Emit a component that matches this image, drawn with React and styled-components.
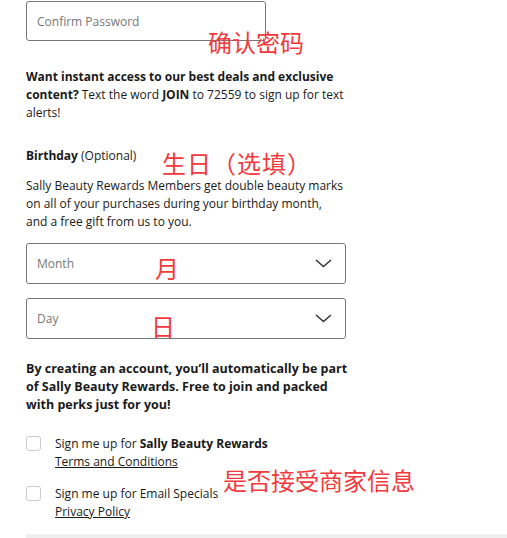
import styled, { createGlobalStyle } from "styled-components";

const GlobalStyle = createGlobalStyle`
  body {
    margin: 0;
    background: #fff;
    font-family: "Open Sans", "Liberation Sans", sans-serif;
    color: #1a1a1a;
  }
`;

function Chevron() {
  return (
    <svg width="17" height="9" viewBox="0 0 17 9" fill="none">
      <polyline points="1,1 8.5,7.5 16,1" stroke="#333" strokeWidth="1.5" />
    </svg>
  );
}

function App() {
  return (
    <Page>
      <GlobalStyle />
      <Input placeholder="Confirm Password" type="password" />

      <Text $top={27}>
        <b>Want instant access to our best deals and exclusive content?</b> Text
        the word <b>JOIN</b> to 72559 to sign up for text alerts!
      </Text>

      <Text $top={25}>
        <b>Birthday</b> (Optional)
      </Text>
      <Text $top={12} $width={319}>
        Sally Beauty Rewards Members get double beauty marks on all of your
        purchases during your birthday month, and a free gift from us to you.
      </Text>

      <Select $top={12}>
        <span>Month</span>
        <Chevron />
      </Select>
      <Select $top={14}>
        <span>Day</span>
        <Chevron />
      </Select>

      <Lead>
        By creating an account, you’ll automatically be part of Sally Beauty
        Rewards. Free to join and packed with perks just for you!
      </Lead>

      <CheckRow $top={21}>
        <Box />
        <div>
          <div>
            Sign me up for <b>Sally Beauty Rewards</b>
          </div>
          <Link>Terms and Conditions</Link>
        </div>
      </CheckRow>
      <CheckRow $top={14}>
        <Box />
        <div>
          <div>Sign me up for Email Specials</div>
          <Link>Privacy Policy</Link>
        </div>
      </CheckRow>

      <Footer />

      <Note $x={208} $y={27}>确认密码</Note>
      <Note $x={162} $y={148} $spacing={1}>生日（选填）</Note>
      <Note $x={155} $y={253}>月</Note>
      <Note $x={151} $y={311}>日</Note>
      <Note $x={223} $y={465}>是否接受商家信息</Note>
    </Page>
  );
}

const Page = styled.div`
  position: relative;
  padding: 1px 0 0 26px;
  font-size: 12px;
  line-height: 18px;
  height: 537px;
  overflow: hidden;
`;

const Input = styled.input`
  display: block;
  box-sizing: border-box;
  width: 240px;
  height: 40px;
  border: 1px solid #777;
  border-radius: 3px;
  padding: 0 10px;
  font-family: inherit;
  font-size: 12px;
  &::placeholder {
    color: #777;
  }
`;

const Text = styled.p`
  margin: ${(p) => p.$top}px 0 0;
  width: ${(p) => p.$width || 322}px;
  b {
    font-weight: 700;
  }
`;

const Lead = styled.p`
  margin: 21px 0 0;
  width: 324px;
  font-size: 12.5px;
  font-weight: 700;
`;

const Select = styled.div`
  box-sizing: border-box;
  margin-top: ${(p) => p.$top}px;
  width: 320px;
  height: 41px;
  border: 1px solid #777;
  border-radius: 3px;
  padding: 0 13px 0 10px;
  display: flex;
  align-items: center;
  justify-content: space-between;
  color: #777;
`;

const CheckRow = styled.div`
  margin-top: ${(p) => p.$top}px;
  display: flex;
  gap: 14px;
  align-items: flex-start;
  b {
    font-weight: 700;
  }
`;

const Box = styled.span`
  box-sizing: border-box;
  width: 15px;
  height: 15px;
  margin-top: 1px;
  border: 1px solid #ccc;
  border-radius: 3px;
  flex: none;
`;

const Link = styled.a`
  color: #1a1a1a;
  text-decoration: underline;
`;

const Footer = styled.div`
  margin-top: 13px;
  height: 20px;
  background: #efefef;
`;

const Note = styled.span`
  position: absolute;
  left: ${(p) => p.$x}px;
  top: ${(p) => p.$y}px;
  font-family: "Noto Sans CJK SC", sans-serif;
  font-size: 24px;
  line-height: 30px;
  letter-spacing: ${(p) => p.$spacing || 0}px;
  color: #f23a3d;
  white-space: nowrap;
`;

export default App;
